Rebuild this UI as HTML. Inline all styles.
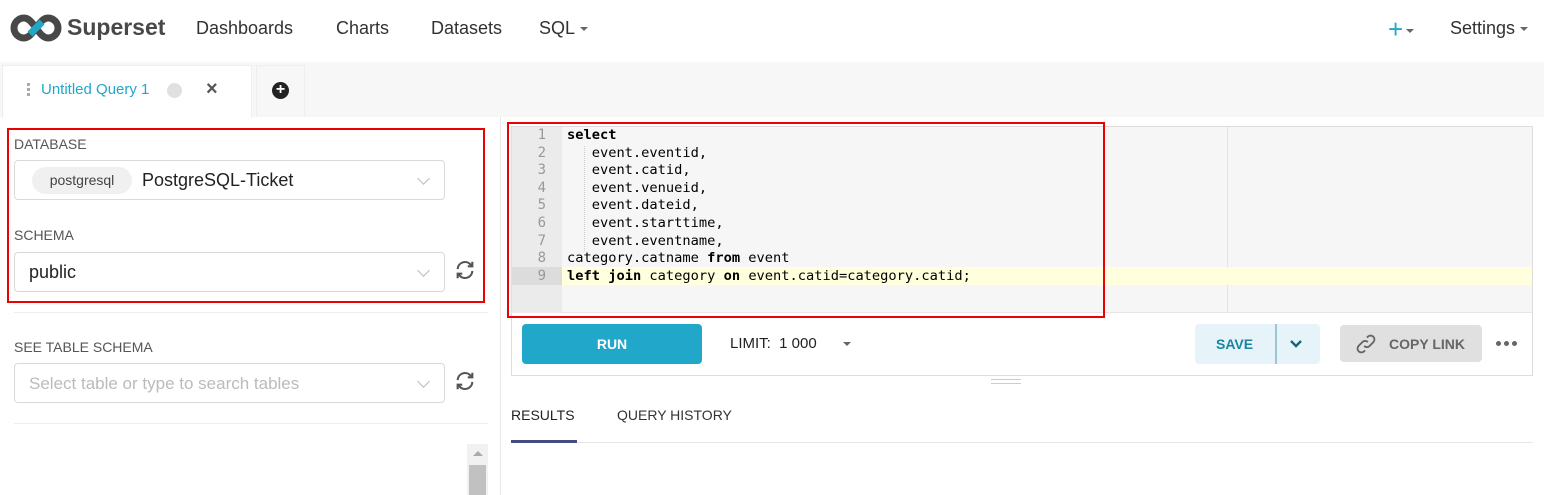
<!DOCTYPE html>
<html><head><meta charset="utf-8"><style>
*{box-sizing:border-box;margin:0;padding:0}
body{width:1544px;height:495px;overflow:hidden;background:#fff;font-family:"Liberation Sans",sans-serif;position:relative;color:#323232}
.a{position:absolute}
.nav{font-size:18px;color:#323232;top:18px}
.caret{display:inline-block;width:0;height:0;border-left:4px solid transparent;border-right:4px solid transparent;border-top:4px solid #666;vertical-align:middle;margin-left:5px}
.lbl{font-size:14px;color:#555;left:14px}
.sel{left:14px;width:431px;height:40px;border:1px solid #d9d9d9;border-radius:4px}
.chev{position:absolute;right:16px;top:13px;width:9px;height:9px;border-right:1px solid #bbb;border-bottom:1px solid #bbb;transform:rotate(45deg)}
.code{font-family:"DejaVu Sans Mono","Liberation Mono",monospace;font-size:13.7px;line-height:17.6px;white-space:pre;color:#000}
.gut{font-family:"DejaVu Sans Mono",monospace;font-size:14px;line-height:17.6px;color:#999;text-align:right}
b{font-weight:bold}
</style></head><body>
<svg class="a" style="left:10px;top:14px" width="52" height="28" viewBox="0 0 52 28">
<path d="M14 4a10 10 0 1 0 0 20c4 0 7-3 12-10s8-10 12-10a10 10 0 1 1 0 20c-4 0-7-3-12-10S18 4 14 4z" fill="none" stroke="#484848" stroke-width="7"/>
<path d="M20 20l6-6M26 14l6-6" stroke="#20a7c9" stroke-width="7"/>
</svg>
<div class="a" style="left:67px;top:14px;font-size:23px;font-weight:bold;color:#484848">Superset</div>
<div class="a nav" style="left:196px">Dashboards</div>
<div class="a nav" style="left:336px">Charts</div>
<div class="a nav" style="left:431px">Datasets</div>
<div class="a nav" style="left:539px">SQL<span class="caret"></span></div>
<div class="a nav" style="left:1388px;top:14px;font-size:26px;color:#20a7c9;font-weight:300">+<span class="caret" style="margin-left:3px"></span></div>
<div class="a nav" style="left:1450px">Settings<span class="caret"></span></div>
<div class="a" style="left:0;top:62px;width:1544px;height:55px;background:#f7f7f7"></div>
<div class="a" style="left:2px;top:65px;width:250px;height:53px;background:#fff;border:1px solid #eee;border-bottom:none"></div>
<div class="a" style="left:27px;top:83px;width:3px;height:14px;background:repeating-linear-gradient(#aaa 0 3px,transparent 3px 5px)"></div>
<div class="a" style="left:41px;top:81px;font-size:15px;color:#20a7c9">Untitled Query 1</div>
<div class="a" style="left:167px;top:83px;width:15px;height:15px;border-radius:50%;background:#e0e0e0"></div>
<div class="a" style="left:206px;top:78px;font-size:20px;color:#555;font-weight:bold">×</div>
<div class="a" style="left:256px;top:65px;width:49px;height:52px;background:#f7f7f7;border:1px solid #eee;border-bottom:none"></div>
<div class="a" style="left:272px;top:82px;width:17px;height:17px;border-radius:50%;background:#222;color:#fff;font-size:16px;line-height:16px;text-align:center;font-weight:bold">+</div>
<div class="a" style="left:500px;top:117px;width:1px;height:378px;background:#e8e8e8"></div>
<div class="a" style="left:7px;top:128px;width:478px;height:175px;border:2px solid #e00"></div>
<div class="a lbl" style="top:136px">DATABASE</div>
<div class="a sel" style="top:160px"><div class="a" style="left:17px;top:6px;width:100px;height:27px;border-radius:14px;background:#f0f0f0;font-size:14px;color:#444;text-align:center;line-height:27px">postgresql</div><div class="a" style="left:127px;top:9px;font-size:18px;color:#222">PostgreSQL-Ticket</div><div class="chev"></div></div>
<div class="a lbl" style="top:227px">SCHEMA</div>
<div class="a sel" style="top:252px"><div class="a" style="left:14px;top:9px;font-size:18px;color:#222">public</div><div class="chev"></div></div>
<svg class="a" style="left:454px;top:259px" width="22" height="22" viewBox="0 0 24 24" fill="none" stroke="#555" stroke-width="2.3"><path d="M4 11a8 8 0 0 1 14-5l2 2M20 13a8 8 0 0 1-14 5l-2-2"/><path d="M20 3v5h-5M4 21v-5h5"/></svg>
<div class="a" style="left:14px;top:312px;width:474px;height:1px;background:#eee"></div>
<div class="a lbl" style="top:339px">SEE TABLE SCHEMA</div>
<div class="a sel" style="top:363px"><div class="a" style="left:14px;top:10px;font-size:17px;color:#bbb">Select table or type to search tables</div><div class="chev"></div></div>
<svg class="a" style="left:454px;top:370px" width="22" height="22" viewBox="0 0 24 24" fill="none" stroke="#555" stroke-width="2.3"><path d="M4 11a8 8 0 0 1 14-5l2 2M20 13a8 8 0 0 1-14 5l-2-2"/><path d="M20 3v5h-5M4 21v-5h5"/></svg>
<div class="a" style="left:14px;top:423px;width:474px;height:1px;background:#eee"></div>
<div class="a" style="left:467px;top:444px;width:21px;height:51px;background:#f1f1f1"></div>
<div class="a" style="left:469px;top:465px;width:17px;height:30px;background:#c1c1c1"></div>
<div class="a" style="left:473px;top:451px;width:0;height:0;border-left:5px solid transparent;border-right:5px solid transparent;border-bottom:5px solid #aaa"></div>
<div class="a" style="left:511px;top:126px;width:1022px;height:250px;border:1px solid #ddd"></div>
<div class="a" style="left:512px;top:127px;width:1020px;height:186px;background:#f6f6f6;border-bottom:1px solid #e6e6e6"></div>
<div class="a" style="left:512px;top:127px;width:50px;height:186px;background:#ebebeb"></div>
<div class="a" style="left:1227px;top:127px;width:1px;height:186px;background:#e4e4e4"></div>
<div class="a" style="left:562px;top:267px;width:970px;height:18px;background:#ffffdd"></div>
<div class="a" style="left:512px;top:267px;width:50px;height:18px;background:#dcdcdc"></div>
<div class="a gut" style="left:512px;top:127px;width:34px">1<br>2<br>3<br>4<br>5<br>6<br>7<br>8<br>9</div>
<div class="a" style="left:584px;top:146px;width:1px;height:105px;border-left:1px dotted #ccc"></div>
<div class="a code" style="left:567px;top:127px"><b>select</b>
   event.eventid,
   event.catid,
   event.venueid,
   event.dateid,
   event.starttime,
   event.eventname,
category.catname <b>from</b> event
<b>left</b> <b>join</b> category <b>on</b> event.catid=category.catid;</div>
<div class="a" style="left:507px;top:122px;width:598px;height:196px;border:2px solid #e00"></div>
<div class="a" style="left:522px;top:324px;width:180px;height:40px;background:#20a7c9;border-radius:4px;color:#fff;font-weight:bold;font-size:14px;text-align:center;line-height:40px">RUN</div>
<div class="a" style="left:730px;top:335px;font-size:15px;color:#222">LIMIT:&nbsp; 1 000</div>
<div class="a" style="left:843px;top:342px;width:0;height:0;border-left:4px solid transparent;border-right:4px solid transparent;border-top:4px solid #666"></div>
<div class="a" style="left:1195px;top:324px;width:125px;height:40px;background:#e6f4f9;border-radius:4px"></div>
<div class="a" style="left:1216px;top:336px;font-size:14px;font-weight:bold;color:#1985a0">SAVE</div>
<div class="a" style="left:1275px;top:324px;width:2px;height:40px;background:#9cc6d3"></div>
<svg class="a" style="left:1288px;top:338px" width="16" height="12" viewBox="0 0 16 12"><path d="M3 3l5 5 5-5" fill="none" stroke="#1a6378" stroke-width="2.4"/></svg>
<div class="a" style="left:1340px;top:325px;width:142px;height:37px;background:#e0e0e0;border-radius:4px"></div>
<svg class="a" style="left:1355px;top:333px" width="22" height="22" viewBox="0 0 24 24" fill="none" stroke="#666" stroke-width="2"><path d="M10 14a4 4 0 0 0 6 0l4-4a4 4 0 0 0-6-6l-1 1"/><path d="M14 10a4 4 0 0 0-6 0l-4 4a4 4 0 0 0 6 6l1-1"/></svg>
<div class="a" style="left:1389px;top:336px;font-size:14px;font-weight:bold;color:#666">COPY LINK</div>
<div class="a" style="left:1496px;top:341px;font-size:0">
<span style="display:inline-block;width:5px;height:5px;border-radius:50%;background:#666;margin-right:3px"></span><span style="display:inline-block;width:5px;height:5px;border-radius:50%;background:#666;margin-right:3px"></span><span style="display:inline-block;width:5px;height:5px;border-radius:50%;background:#666"></span></div>
<div class="a" style="left:991px;top:379px;width:30px;height:1px;background:#ccc"></div>
<div class="a" style="left:991px;top:383px;width:30px;height:1px;background:#ccc"></div>
<div class="a" style="left:511px;top:407px;font-size:14px;color:#222">RESULTS</div>
<div class="a" style="left:617px;top:407px;font-size:14px;color:#333">QUERY HISTORY</div>
<div class="a" style="left:511px;top:442px;width:1022px;height:1px;background:#e8e8e8"></div>
<div class="a" style="left:511px;top:440px;width:66px;height:3px;background:#484b7f"></div>
</body></html>
